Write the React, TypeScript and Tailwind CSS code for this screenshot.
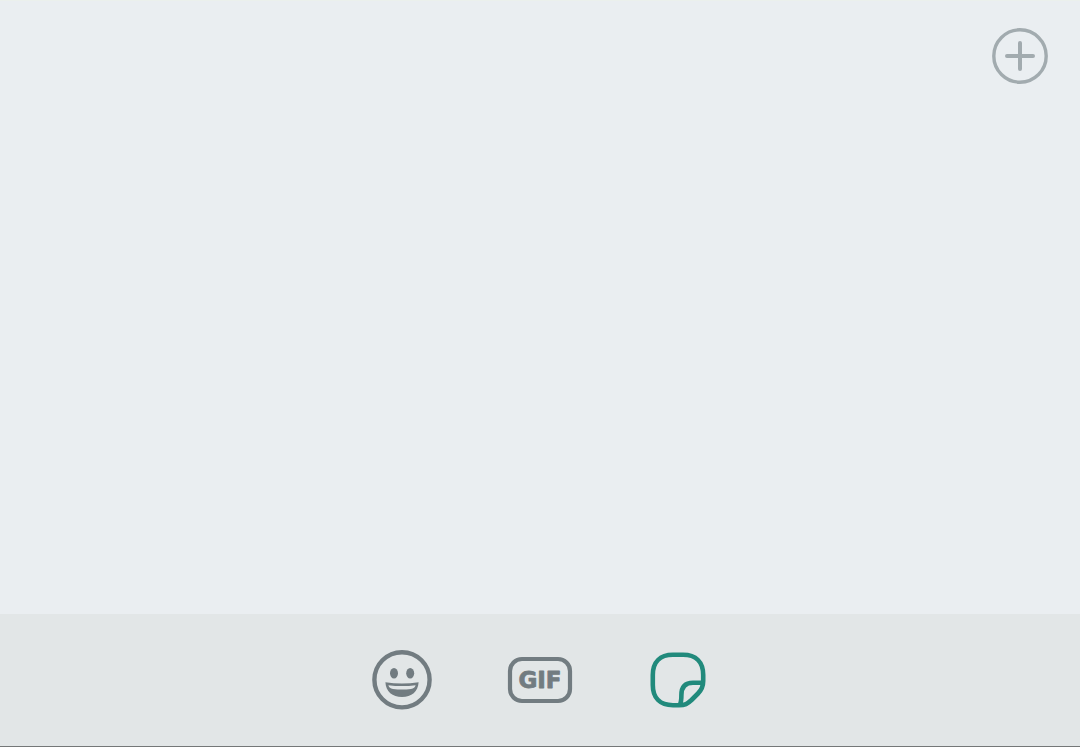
import React, { useState } from "react";

type Tab = "emoji" | "gif" | "sticker";

function PlusIcon() {
  return (
    <svg viewBox="0 0 56 56" fill="none" stroke="currentColor" className="size-14">
      <circle cx="28" cy="28" r="26.2" strokeWidth="3.4" />
      <path d="M28 15v26M15 28h26" strokeWidth="4" strokeLinecap="round" />
    </svg>
  );
}

function EmojiIcon() {
  return (
    <svg viewBox="0 0 80 80" fill="currentColor" className="size-20">
      <circle cx="40" cy="39.8" r="27.6" fill="none" stroke="currentColor" strokeWidth="4.4" />
      <ellipse cx="32" cy="33.2" rx="4" ry="5.3" />
      <ellipse cx="48.2" cy="33.2" rx="4" ry="5.3" />
      <path
        fillRule="evenodd"
        d="M23.4 42.2Q40 45 56.6 42.2C56.2 51.5 49.5 57 40 57S23.8 51.5 23.4 42.2ZM26.4 45.2C27 47.2 28.4 48.6 31 49Q40 50.2 49 49C51.6 48.6 53 47.2 53.6 45.2Q40 47 26.4 45.2Z"
      />
    </svg>
  );
}

function GifIcon() {
  return (
    <svg viewBox="0 0 80 80" fill="currentColor" stroke="currentColor" className="size-20">
      <rect x="10" y="19" width="60" height="42" rx="12" fill="none" strokeWidth="4.2" />
      <text
        x="40"
        y="48"
        textAnchor="middle"
        strokeWidth="0.8"
        strokeLinejoin="round"
        className="font-['DejaVu_Sans',sans-serif] text-[23px] font-bold"
      >
        GIF
      </text>
    </svg>
  );
}

function StickerIcon() {
  return (
    <svg
      viewBox="0 0 80 80"
      fill="none"
      stroke="currentColor"
      strokeWidth="4.6"
      strokeLinejoin="round"
      className="size-20"
    >
      <path d="M35 14.8H45C58 14.8 65.2 22 65.2 35V41C65.2 47 63.5 50 60 53.5L53.5 60C49.5 63.8 47 65.2 41 65.2H35C22 65.2 14.8 58 14.8 45V35C14.8 22 22 14.8 35 14.8Z" />
      <path d="M42 64.5C43.2 62 43.4 59 43.4 55C43.4 47 47.5 42.8 55 42.8H64.5" />
    </svg>
  );
}

const tabs: { id: Tab; label: string; icon: React.ReactNode }[] = [
  { id: "emoji", label: "Emoji", icon: <EmojiIcon /> },
  { id: "gif", label: "GIF", icon: <GifIcon /> },
  { id: "sticker", label: "Stickers", icon: <StickerIcon /> },
];

function App() {
  const [active, setActive] = useState<Tab>("sticker");

  return (
    <div className="min-h-screen flex flex-col bg-[#eaeef1]">
      <main className="flex-1 flex items-start justify-end border-t border-[#ebf0ec] px-8 pt-[27px]">
        <button type="button" aria-label="Add stickers" className="text-[#a2abaf] cursor-pointer">
          <PlusIcon />
        </button>
      </main>

      <nav className="flex items-center justify-center border-b border-[#747778] bg-[#e2e6e7] py-[26px]">
        {tabs.map((tab) => (
          <button
            key={tab.id}
            type="button"
            aria-label={tab.label}
            aria-pressed={active === tab.id}
            onClick={() => setActive(tab.id)}
            className={`flex justify-center w-[138px] cursor-pointer ${
              active === tab.id ? "text-[#218a7c]" : "text-[#727c81]"
            }`}
          >
            {tab.icon}
          </button>
        ))}
      </nav>
    </div>
  );
}

export default App;
